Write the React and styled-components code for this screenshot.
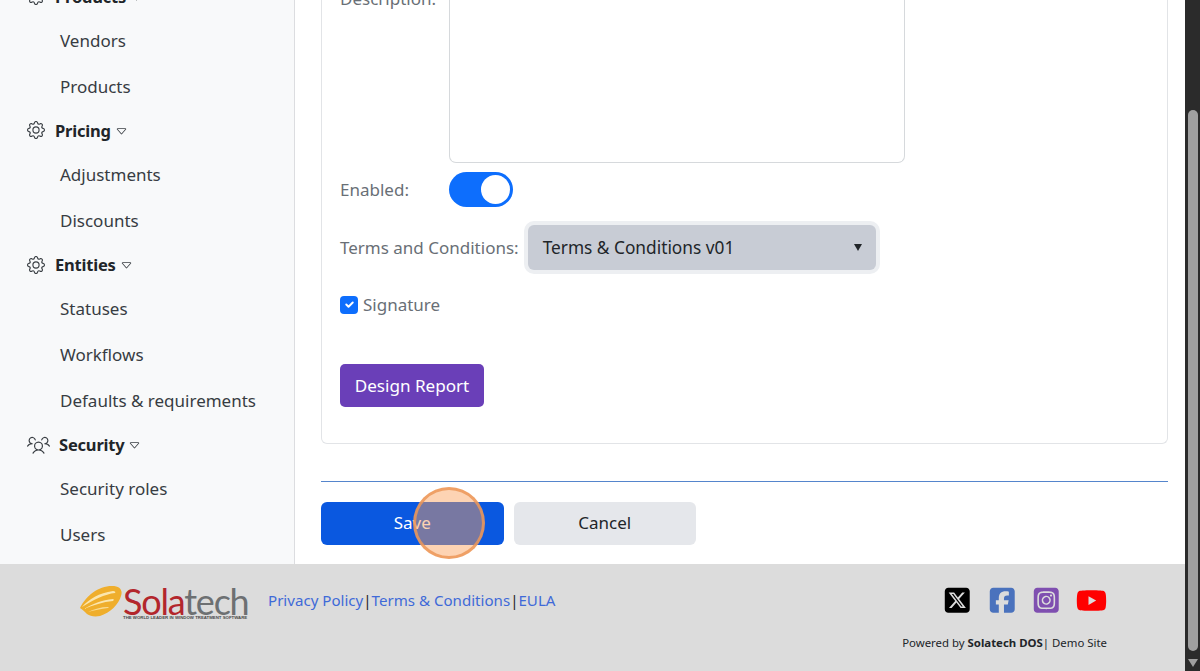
import React from 'react'
import styled, { createGlobalStyle } from 'styled-components'
import { BsGear, BsCaretDown } from 'react-icons/bs'
import { PiUsersThreeLight } from 'react-icons/pi'
import { FaSquareXTwitter, FaSquareFacebook, FaSquareInstagram, FaYoutube } from 'react-icons/fa6'

const GlobalStyle = createGlobalStyle`
  html, body { margin: 0; padding: 0; height: 100%; overflow: hidden; }
  body { font-family: "Noto Sans", "Open Sans", sans-serif; background: #fff; }
  #root { height: 100%; }
  * { box-sizing: border-box; }
`

const Page = styled.div`
  position: relative;
  display: flex;
  width: 1200px;
  height: 671px;
  overflow: hidden;
`
const Main = styled.div`
  flex: 1;
  min-width: 0;
  display: flex;
  flex-direction: column;
`
const Body = styled.div`
  height: 564px;
  display: flex;
  overflow: hidden;
`
const Sidebar = styled.nav`
  width: 295px;
  flex-shrink: 0;
  background: #f8f9fa;
  border-right: 1px solid #dcdde0;
  display: flex;
  flex-direction: column;
  justify-content: flex-end;
  padding-bottom: 7px;
`
const GroupHeader = styled.div`
  height: 43px;
  flex-shrink: 0;
  display: flex;
  align-items: center;
  padding-left: 27px;
  font-size: 16.5px;
  font-weight: 700;
  color: #212529;
  letter-spacing: -0.2px;
  svg.main { font-size: 18px; color: #3a3f44; margin-right: 10px; }
  svg.people { font-size: 25px; color: #3a3f44; margin: 0 8.5px 0 -1.5px; }
  svg.caret { font-size: 13px; color: #3a3f44; margin-left: 4px; margin-top: 2px; }
`
const NavItem = styled.div`
  height: 45.6px;
  flex-shrink: 0;
  display: flex;
  align-items: center;
  padding-left: 60px;
  font-size: 17px;
  color: #373c42;
`
const Content = styled.div`
  flex: 1;
  min-width: 0;
  padding: 0 17px 19px 26px;
  display: flex;
  flex-direction: column;
  justify-content: flex-end;
`
const Card = styled.div`
  border: 1px solid #e2e4e7;
  border-top: none;
  border-radius: 0 0 6px 6px;
  padding: 0 18px 36px;
  display: flex;
  flex-direction: column;
`
const DescRow = styled.div`
  display: flex;
  height: 163px;
`
const FieldLabel = styled.label`
  font-size: 17px;
  color: #696f76;
  white-space: nowrap;
  width: ${p => p.$width || 'auto'};
  flex-shrink: 0;
`
const TextArea = styled.div`
  width: 456px;
  margin-top: -10px;
  border: 1px solid #d6d9dc;
  border-top: none;
  border-radius: 0 0 7px 7px;
  background: #fff;
`
const ClippedLabel = styled(FieldLabel)`
  margin-top: -13px;
  line-height: 24px;
`
const FormRow = styled.div`
  display: flex;
  align-items: center;
  margin-top: ${p => p.$top}px;
`
const Switch = styled.div`
  width: 64px;
  height: 35px;
  border-radius: 18px;
  background: #0d6efd;
  display: flex;
  align-items: center;
  justify-content: flex-end;
  padding-right: 3px;
  &::after {
    content: '';
    width: 29px;
    height: 29px;
    border-radius: 50%;
    background: #fff;
  }
`
const SelectBox = styled.div`
  width: 348px;
  height: 45px;
  margin-left: 9px;
  border-radius: 6px;
  background: #c8ccd5;
  box-shadow: 0 0 0 4px #edeff2;
  display: flex;
  align-items: center;
  justify-content: space-between;
  padding: 0 14px 0 15px;
  font-size: 17.3px;
  color: #212529;
`
const SelectCaret = styled.span`
  width: 0;
  height: 0;
  border-left: 4.5px solid transparent;
  border-right: 4.5px solid transparent;
  border-top: 7px solid #212529;
`
const CheckBox = styled.span`
  width: 18px;
  height: 18px;
  border-radius: 4px;
  background: #0d6efd;
  display: flex;
  align-items: center;
  justify-content: center;
  margin-right: 5px;
`
const CheckText = styled.span`
  font-size: 17px;
  color: #696f76;
`
const DesignButton = styled.button`
  align-self: flex-start;
  width: 144px;
  height: 43px;
  margin-top: 48px;
  border: none;
  border-radius: 5px;
  background: #6a3fb8;
  color: #fff;
  font: inherit;
  font-size: 17.1px;
  padding: 0;
`
const Divider = styled.div`
  height: 1px;
  flex-shrink: 0;
  margin: 37px 0 20px;
  background: #5585cc;
`
const Actions = styled.div`
  display: flex;
  gap: 10px;
`
const ActionButton = styled.button`
  width: 182.5px;
  height: 43px;
  border: none;
  border-radius: 6px;
  background: ${p => (p.$primary ? '#0a58e0' : '#e5e7eb')};
  color: ${p => (p.$primary ? '#fff' : '#212529')};
  font: inherit;
  font-size: 17px;
  padding: 0 0 2px;
`
const Footer = styled.footer`
  flex: 1;
  background: #dcdcdc;
  padding: 21px 78px 0 80px;
  display: flex;
  justify-content: space-between;
`
const FooterLeft = styled.div`
  display: flex;
  align-items: flex-start;
`
const Logo = styled.div`
  display: flex;
  align-items: flex-start;
  width: 188px;
  height: 36px;
`
const LogoText = styled.div`
  display: flex;
  flex-direction: column;
  margin-left: 1px;
  padding-top: 2px;
  white-space: nowrap;
`
const LogoName = styled.div`
  font-family: "Lato", sans-serif;
  font-size: 36px;
  line-height: 28px;
  letter-spacing: -1.2px;
  color: #6d7072;
  b { font-weight: 400; color: #b3262c; }
`
const LogoTag = styled.div`
  font-family: "Liberation Sans", sans-serif;
  font-size: 4.33px;
  line-height: 6px;
  font-weight: 700;
  color: #4a4a4a;
  white-space: nowrap;
`
const FooterLinks = styled.div`
  display: flex;
  align-items: center;
  height: 30px;
  font-size: 15.1px;
  color: #212529;
  a { color: #3f6ad8; text-decoration: none; }
`
const FooterRight = styled.div`
  display: flex;
  flex-direction: column;
  align-items: flex-end;
`
const Socials = styled.div`
  display: flex;
  align-items: center;
  height: 30px;
  gap: 15.7px;
`
const SocialIcon = styled.span`
  display: flex;
  font-size: ${p => p.$size || 28.5}px;
  color: ${p => p.$color};
`
const Powered = styled.div`
  margin-top: 20px;
  font-size: 11.4px;
  color: #212529;
  b { font-weight: 700; }
`
const ScrollBar = styled.div`
  width: 15px;
  flex-shrink: 0;
  background: #2b2b2b;
  display: flex;
  flex-direction: column;
  align-items: center;
  padding: 110px 0 4px;
`
const ScrollThumb = styled.div`
  width: 10px;
  flex: 1;
  border-radius: 5px;
  background: #a0a0a0;
`
const ScrollArrow = styled.div`
  margin-top: 8px;
  width: 0;
  height: 0;
  border-left: 5.5px solid transparent;
  border-right: 5.5px solid transparent;
  border-top: 8px solid #a0a0a0;
`
const ClickMarker = styled.div`
  position: absolute;
  left: 413px;
  top: 487px;
  width: 72px;
  height: 72px;
  border-radius: 50%;
  border: 3px solid rgba(236, 150, 88, 0.85);
  background: rgba(250, 160, 90, 0.46);
`

const groups = [
  { title: 'Pricing', items: ['Adjustments', 'Discounts'] },
  { title: 'Entities', items: ['Statuses', 'Workflows', 'Defaults & requirements'] },
  { title: 'Security', people: true, items: ['Security roles', 'Users'] },
]

const Swoosh = () => (
  <svg width="42" height="31" viewBox="0 0 42 31" style={{ marginTop: 1, flexShrink: 0 }}>
    <path d="M0 22C6 10 18 0 32 0c8 0 11 4 9 10-2 8-11 17-21 20-6 1-10 0-13-2C5 26 3 24 0 22z" fill="#efae2c" />
    <path d="M2 21C9 13 19 7 33 5c2 0 3 1 2 2C25 8 13 14 2 21z" fill="#fbe6ae" />
    <path d="M4 23c8-5 18-9 29-10 1 0 1 1 0 2-10 1-20 4-29 8z" fill="#fbe6ae" />
    <path d="M8 26c6-3 13-5 20-5 1 0 1 1 0 1-7 1-14 2-20 4z" fill="#f9dc94" />
  </svg>
)

const App = () => {
  return (
    <Page>
      <GlobalStyle />
      <Main>
        <Body>
          <Sidebar>
            <GroupHeader>
              <BsGear className="main" />Products<BsCaretDown className="caret" />
            </GroupHeader>
            <NavItem>Vendors</NavItem>
            <NavItem>Products</NavItem>
            {groups.map(g => (
              <React.Fragment key={g.title}>
                <GroupHeader>
                  {g.people ? <PiUsersThreeLight className="people" /> : <BsGear className="main" />}
                  {g.title}
                  <BsCaretDown className="caret" />
                </GroupHeader>
                {g.items.map(i => <NavItem key={i}>{i}</NavItem>)}
              </React.Fragment>
            ))}
          </Sidebar>
          <Content>
            <Card>
              <DescRow>
                <ClippedLabel $width="109px">Description:</ClippedLabel>
                <TextArea />
              </DescRow>
              <FormRow $top={9}>
                <FieldLabel $width="109px">Enabled:</FieldLabel>
                <Switch />
              </FormRow>
              <FormRow $top={18}>
                <FieldLabel>Terms and Conditions:</FieldLabel>
                <SelectBox>
                  Terms &amp; Conditions v01
                  <SelectCaret />
                </SelectBox>
              </FormRow>
              <FormRow $top={23}>
                <CheckBox>
                  <svg width="13" height="13" viewBox="0 0 20 20">
                    <path fill="none" stroke="#fff" strokeLinecap="round" strokeLinejoin="round" strokeWidth="3" d="M5 10l3.5 3.5L15 7" />
                  </svg>
                </CheckBox>
                <CheckText>Signature</CheckText>
              </FormRow>
              <DesignButton>Design Report</DesignButton>
            </Card>
            <Divider />
            <Actions>
              <ActionButton $primary>Save</ActionButton>
              <ActionButton>Cancel</ActionButton>
            </Actions>
          </Content>
        </Body>
        <Footer>
          <FooterLeft>
            <Logo>
              <Swoosh />
              <LogoText>
                <LogoName><b>Sola</b>tech</LogoName>
                <LogoTag>THE WORLD LEADER IN WINDOW TREATMENT SOFTWARE</LogoTag>
              </LogoText>
            </Logo>
            <FooterLinks>
              <a href="#privacy">Privacy Policy</a>|<a href="#terms">Terms &amp; Conditions</a>|<a href="#eula">EULA</a>
            </FooterLinks>
          </FooterLeft>
          <FooterRight>
            <Socials>
              <SocialIcon $color="#000"><FaSquareXTwitter /></SocialIcon>
              <SocialIcon $color="#4a72bd"><FaSquareFacebook /></SocialIcon>
              <SocialIcon $color="#7f4fb0"><FaSquareInstagram /></SocialIcon>
              <SocialIcon $color="#f00" $size={31}><FaYoutube /></SocialIcon>
            </Socials>
            <Powered>Powered by <b>Solatech DOS</b>| Demo Site</Powered>
          </FooterRight>
        </Footer>
      </Main>
      <ScrollBar>
        <ScrollThumb />
        <ScrollArrow />
      </ScrollBar>
      <ClickMarker />
    </Page>
  )
}

export default App
